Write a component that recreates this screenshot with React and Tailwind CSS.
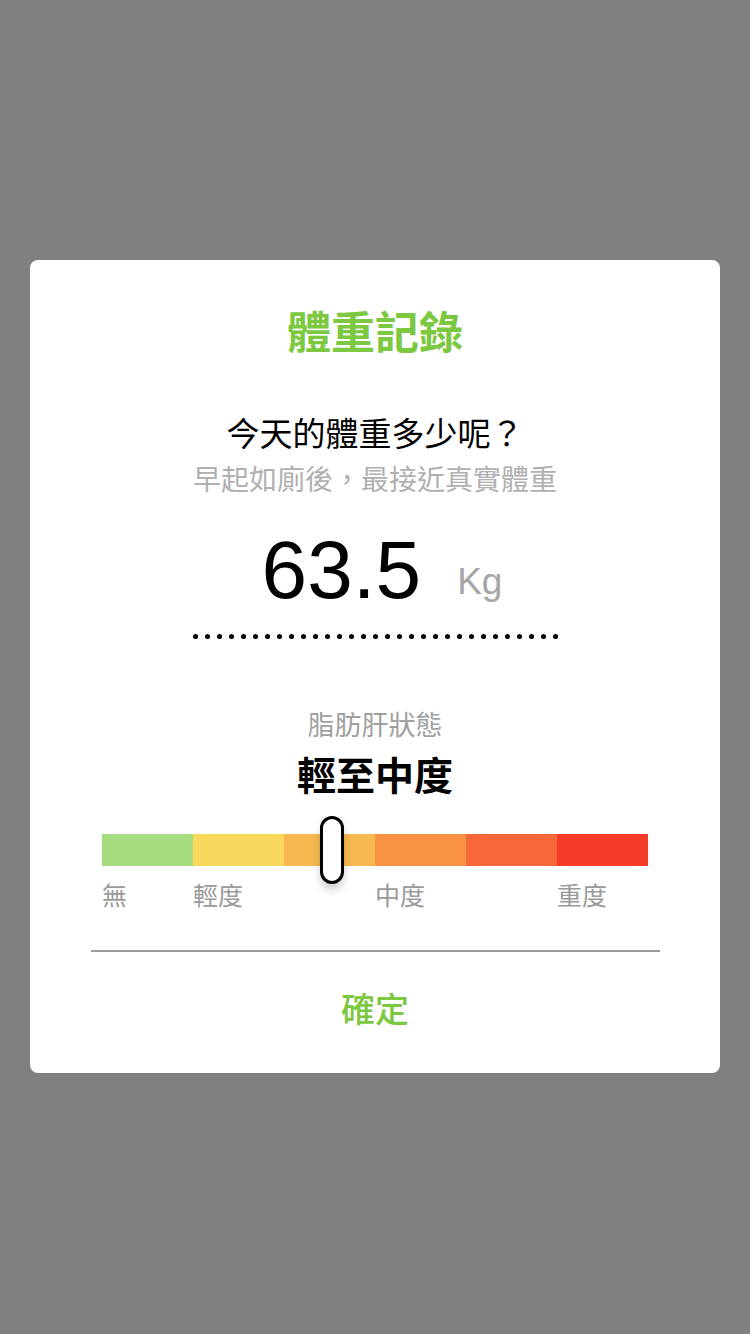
import React from "react";

const segments = [
  "bg-[#a6dc80]",
  "bg-[#f8d95b]",
  "bg-[#f7b84f]",
  "bg-[#f99245]",
  "bg-[#f8673a]",
  "bg-[#f63a2a]",
];

const levels = ["無", "輕度", "", "中度", "", "重度"];

export default function App() {
  const dots = Array.from({ length: 31 }, (_, i) => i);

  return (
    <div
      className="min-h-[1334px] w-[750px] bg-[#808080] px-[30px] pt-[260px]"
      style={{ fontFamily: '"Noto Sans CJK TC", "Noto Sans", sans-serif' }}
    >
      <div className="flex h-[813px] flex-col items-center rounded-[8px] bg-white pt-[48px]">
        <h2 className="text-[44px] font-bold leading-[44px] text-[#7cc841]">
          體重記錄
        </h2>

        <p className="mt-[64px] text-[33px] leading-[33px] text-black">
          今天的體重多少呢？
        </p>
        <p className="mt-[15px] text-[28px] leading-[28px] text-[#b0b0b0]">
          早起如廁後，最接近真實體重
        </p>

        {/* weight value */}
        <div
          className="mt-[37px] ml-[14px] flex h-[82px] items-baseline gap-[36px]"
          style={{ fontFamily: '"Liberation Sans", Arial, sans-serif' }}
        >
          <span className="text-[82px] leading-[82px] text-black">63.5</span>
          <span className="relative -top-[4px] text-[37px] leading-[37px] text-[#a6a6a6]">
            Kg
          </span>
        </div>

        <div className="mt-[23px] flex gap-[7px]">
          {dots.map((d) => (
            <span key={d} className="h-[5px] w-[5px] rounded-full bg-black" />
          ))}
        </div>

        <p className="mt-[71px] text-[27px] leading-[28px] text-[#a0a0a0]">
          脂肪肝狀態
        </p>
        <p className="mt-[15px] text-[39px] font-bold leading-[40px] text-black">
          輕至中度
        </p>

        {/* severity bar */}
        <div className="relative mt-[41px] w-[546px]">
          <div className="grid h-[32px] grid-cols-6">
            {segments.map((c, i) => (
              <div key={i} className={c} />
            ))}
          </div>
          <div className="absolute left-[218px] top-[-18px] h-[68px] w-[24px] rounded-full border-[3px] border-black bg-white shadow-[0_6px_8px_rgba(0,0,0,0.18)]" />
          <div className="mt-[15px] grid grid-cols-6 text-[25px] leading-[26px] text-[#9a9a9a]">
            {levels.map((l, i) => (
              <span key={i} className="whitespace-nowrap">
                {l}
              </span>
            ))}
          </div>
        </div>

        <div className="mt-[43px] h-[2px] w-[569px] bg-[#9a9a9a]" />

        <button className="mt-[39px] text-[34px] font-medium leading-[34px] text-[#7cc841]">
          確定
        </button>
      </div>
    </div>
  );
}
